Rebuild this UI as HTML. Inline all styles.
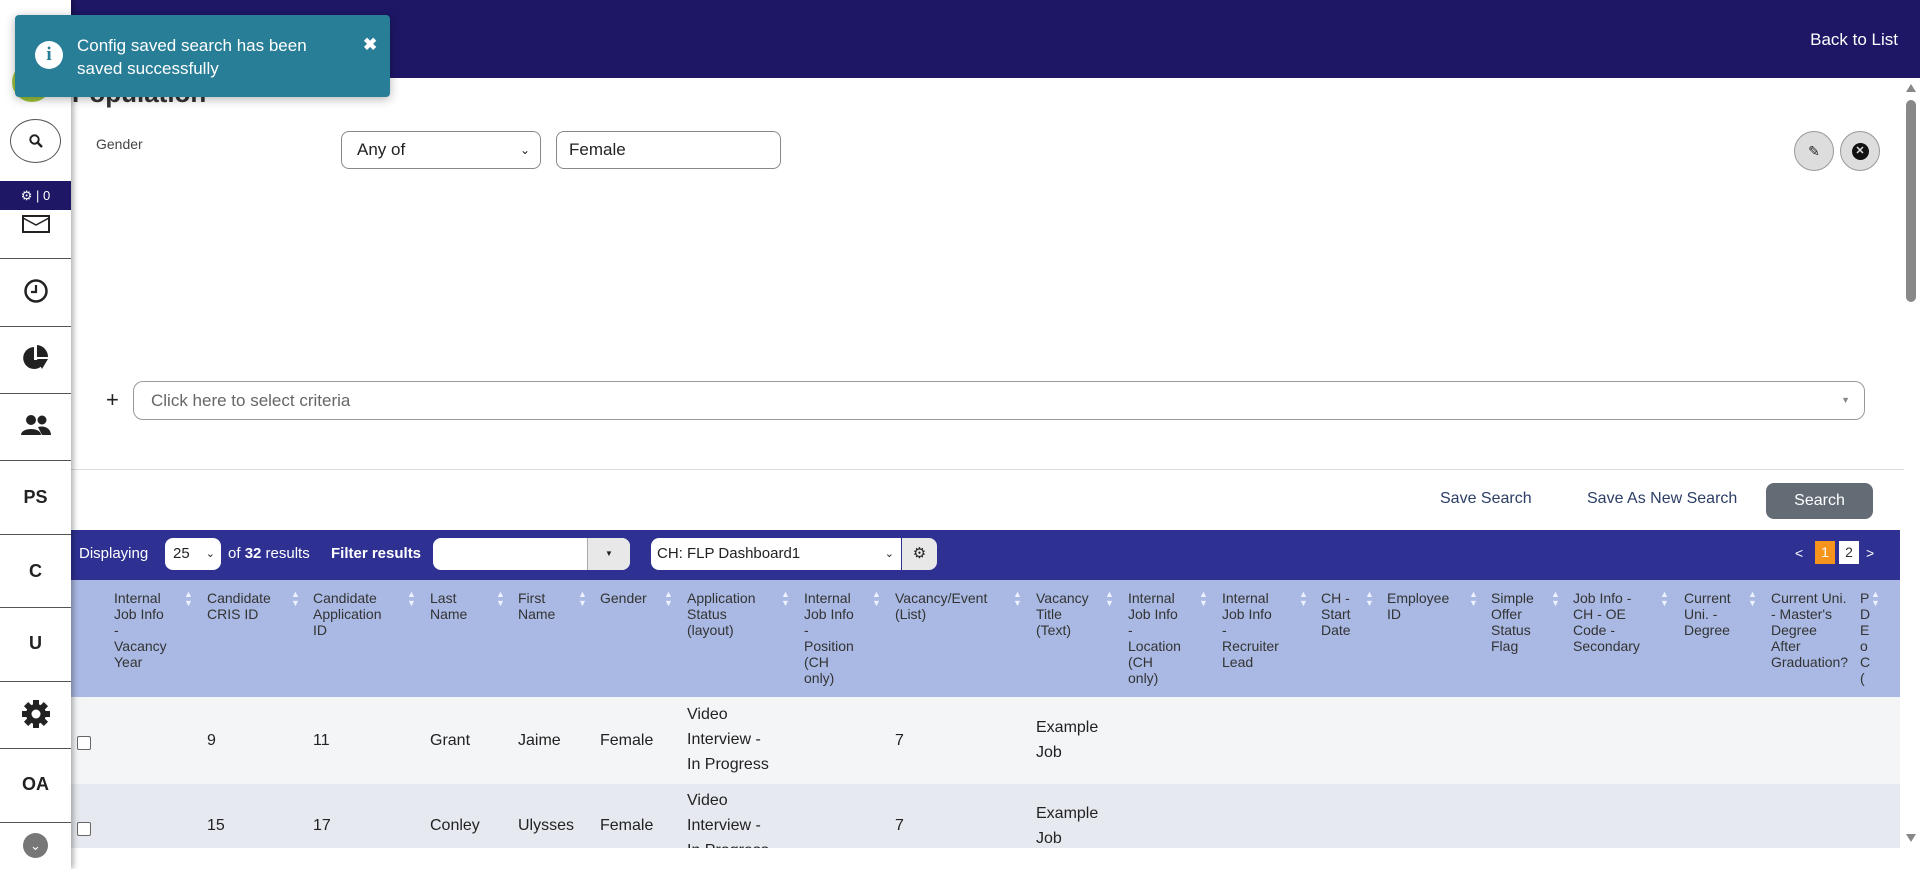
<!DOCTYPE html>
<html><head><meta charset="utf-8"><style>
*{box-sizing:border-box;margin:0;padding:0}
body{width:1920px;height:869px;overflow:hidden;background:#fff;font-family:"Liberation Sans",sans-serif;position:relative;color:#222}
.a{position:absolute}
.top{left:70px;top:0;width:1850px;height:78px;background:#1d1766}
.side{left:0;top:0;width:71px;height:869px;background:#fff;box-shadow:2px 0 6px rgba(0,0,0,.35);z-index:5}
.sep{position:absolute;left:0;width:71px;border-top:1px solid #555}
.si{position:absolute;left:0;width:71px;text-align:center;font-weight:bold;font-size:18px;color:#222}
.toast{left:15px;top:15px;width:375px;height:82px;background:#287d97;border-radius:4px;z-index:10;box-shadow:0 2px 10px rgba(0,0,0,.3);color:#fff;font-size:17px;line-height:23px}
.hd{font-size:14px;line-height:16px;color:#333;top:590px;position:absolute}
.bd{font-size:16px;line-height:25px;color:#222;position:absolute}
.s{position:absolute;top:590px;font-size:9px;line-height:9px;color:#eef2ff}
.cb{position:absolute;left:77px;width:14px;height:14px;border:1px solid #666;border-radius:2px;background:#fff}
</style></head><body>
<div class="a top"></div>
<div class="a" style="right:22px;top:30px;color:#fff;font-size:17px">Back to List</div>

<div class="a toast">
 <div class="a" style="left:20px;top:26px;width:28px;height:28px;border-radius:50%;background:#fff;color:#287d97;font-weight:bold;font-size:19px;line-height:28px;text-align:center;font-family:'Liberation Serif',serif">i</div>
 <div class="a" style="left:62px;top:19px">Config saved search has been<br>saved successfully</div>
 <div class="a" style="left:348px;top:18px;font-size:17px;font-weight:bold">✖</div>
</div>

<div class="a side">
 <div class="a" style="left:12px;top:62px;width:40px;height:40px;border-radius:50%;background:#9cc33b"></div>
 <div class="a" style="left:10px;top:119px;width:51px;height:44px;border:1px solid #555;border-radius:50%;text-align:center;line-height:42px">
  <svg width="16" height="16" viewBox="0 0 16 16" style="vertical-align:middle"><circle cx="6.5" cy="6.5" r="4.2" fill="none" stroke="#222" stroke-width="2"/><path d="M9.5 9.5L14 14" stroke="#222" stroke-width="2.4"/></svg></div>
 <div class="a" style="left:0;top:181px;width:71px;height:29px;background:#1d1766;color:#fff;font-size:13px;text-align:center;line-height:29px">⚙ | 0</div>
 <svg class="a" style="left:22px;top:215px" width="28" height="18" viewBox="0 0 28 18"><rect x="1" y="1" width="26" height="16" fill="none" stroke="#222" stroke-width="2"/><path d="M1 3L14 10L27 3" fill="none" stroke="#222" stroke-width="1.5"/></svg>
 <div class="sep" style="top:258px"></div>
 <svg class="a" style="left:23px;top:278px" width="26" height="26" viewBox="0 0 26 26"><circle cx="13" cy="13" r="10.5" fill="none" stroke="#222" stroke-width="2.5"/><path d="M13 7V14H8" fill="none" stroke="#222" stroke-width="2.2"/></svg>
 <div class="sep" style="top:326px"></div>
 <svg class="a" style="left:22px;top:344px" width="28" height="28" viewBox="0 0 28 28"><path d="M12 3A11 11 0 1 0 23 16H12Z" fill="#222"/><path d="M15 1V13H26A12 12 0 0 0 15 1Z" fill="#222"/><path d="M15 15H26L20 25Z" fill="#222"/></svg>
 <div class="sep" style="top:393px"></div>
 <svg class="a" style="left:21px;top:414px" width="30" height="22" viewBox="0 0 30 22"><circle cx="10" cy="6" r="5" fill="#222"/><path d="M0 21C0 13 20 13 20 21Z" fill="#222"/><circle cx="21" cy="6" r="4.5" fill="#222"/><path d="M17 13C24 11 30 15 30 21H21Z" fill="#222"/></svg>
 <div class="sep" style="top:460px"></div>
 <div class="si" style="top:487px">PS</div>
 <div class="sep" style="top:534px"></div>
 <div class="si" style="top:561px">C</div>
 <div class="sep" style="top:607px"></div>
 <div class="si" style="top:633px">U</div>
 <div class="sep" style="top:681px"></div>
 <svg class="a" style="left:21px;top:699px" width="30" height="30" viewBox="0 0 30 30"><g fill="#222"><rect x="12" y="1" width="6" height="28"/><rect x="1" y="12" width="28" height="6"/><rect x="12" y="1" width="6" height="28" transform="rotate(45 15 15)"/><rect x="12" y="1" width="6" height="28" transform="rotate(-45 15 15)"/><circle cx="15" cy="15" r="10"/></g><circle cx="15" cy="15" r="4.5" fill="#fff"/></svg>
 <div class="sep" style="top:748px"></div>
 <div class="si" style="top:774px">OA</div>
 <div class="sep" style="top:822px"></div>
 <div class="a" style="left:23px;top:833px;width:25px;height:25px;border-radius:50%;background:#777;color:#fff;text-align:center;font-size:13px;line-height:25px">⌄</div>
</div>

<div class="a" style="left:72px;top:78px;font-size:26px;font-weight:bold;color:#333">Population</div>
<div class="a" style="left:96px;top:136px;font-size:14px;color:#444">Gender</div>
<div class="a" style="left:341px;top:131px;width:200px;height:38px;border:1px solid #888;border-radius:8px;font-size:17px;line-height:36px;padding-left:15px">Any of<span style="position:absolute;right:10px;font-size:12px">⌄</span></div>
<div class="a" style="left:556px;top:131px;width:225px;height:38px;border:1px solid #888;border-radius:8px;font-size:17px;line-height:36px;padding-left:12px">Female</div>
<div class="a" style="left:1794px;top:131px;width:40px;height:40px;border:1px solid #999;border-radius:50%;background:#ddd;text-align:center;line-height:38px;font-size:14px">✎</div>
<div class="a" style="left:1840px;top:131px;width:40px;height:40px;border:1px solid #999;border-radius:50%;background:#ddd"><div style="margin:11px auto;width:17px;height:17px;border-radius:50%;background:#111;color:#ddd;font-size:11px;line-height:17px;text-align:center;font-weight:bold">✕</div></div>

<div class="a" style="left:1906px;top:84px;width:0;height:0;border-left:5px solid transparent;border-right:5px solid transparent;border-bottom:8px solid #888"></div>
<div class="a" style="left:1906px;top:100px;width:10px;height:202px;background:#888;border-radius:5px"></div>
<div class="a" style="left:1906px;top:834px;width:0;height:0;border-left:5px solid transparent;border-right:5px solid transparent;border-top:8px solid #888"></div>

<div class="a" style="left:106px;top:387px;font-size:22px">+</div>
<div class="a" style="left:133px;top:381px;width:1732px;height:39px;border:1px solid #999;border-radius:10px;font-size:17px;line-height:37px;padding-left:17px;color:#666">Click here to select criteria<span style="position:absolute;right:14px;font-size:9px;color:#888">▼</span></div>
<div class="a" style="left:71px;top:469px;width:1833px;border-top:1px solid #ddd"></div>

<div class="a" style="left:1440px;top:490px;font-size:16px;color:#2c3e66">Save Search</div>
<div class="a" style="left:1587px;top:490px;font-size:16px;color:#2c3e66">Save As New Search</div>
<div class="a" style="left:1766px;top:483px;width:107px;height:36px;background:#636b75;border-radius:8px;color:#fff;font-size:16px;text-align:center;line-height:36px">Search</div>

<div class="a" style="left:71px;top:530px;width:1829px;height:50px;background:#2e3192"></div>
<div class="a" style="left:79px;top:545px;color:#fff;font-size:15px">Displaying</div>
<div class="a" style="left:165px;top:538px;width:56px;height:32px;background:#fff;border-radius:8px;font-size:15px;line-height:32px;padding-left:8px">25<span style="position:absolute;right:6px;font-size:11px">⌄</span></div>
<div class="a" style="left:228px;top:545px;color:#fff;font-size:15px">of <b>32</b> results</div>
<div class="a" style="left:331px;top:545px;color:#fff;font-size:15px;font-weight:bold">Filter results</div>
<div class="a" style="left:433px;top:538px;width:197px;height:32px;background:#fff;border-radius:8px;overflow:hidden"><div style="position:absolute;right:0;top:0;width:43px;height:32px;background:#e8e8e8;border-left:1px solid #aaa;text-align:center;font-size:8px;line-height:32px">▼</div></div>
<div class="a" style="left:651px;top:538px;width:250px;height:32px;background:#fff;border-radius:8px 0 0 8px;font-size:15px;line-height:32px;padding-left:6px">CH: FLP Dashboard1<span style="position:absolute;right:7px;font-size:11px">⌄</span></div>
<div class="a" style="left:902px;top:538px;width:35px;height:32px;background:#e8e8e8;border-radius:0 8px 8px 0;text-align:center;line-height:32px;font-size:15px">⚙</div>
<div class="a" style="left:1795px;top:545px;color:#fff;font-size:14px">&lt;</div>
<div class="a" style="left:1815px;top:541px;width:20px;height:23px;background:#f7941d;color:#fff;font-size:14px;text-align:center;line-height:23px">1</div>
<div class="a" style="left:1839px;top:541px;width:20px;height:23px;background:#fff;color:#333;font-size:14px;text-align:center;line-height:23px">2</div>
<div class="a" style="left:1866px;top:545px;color:#fff;font-size:14px">&gt;</div>

<div class="a" style="left:71px;top:580px;width:1829px;height:117px;background:#a9b9e3"></div>
<div class="a" style="left:71px;top:697px;width:1829px;height:87px;background:#f4f5f7"></div>
<div class="a" style="left:71px;top:784px;width:1829px;height:64px;background:#e6eaf0"></div>

<div class="hd" style="left:114px">Internal<br>Job Info<br>-<br>Vacancy<br>Year</div>
<div class="hd" style="left:207px">Candidate<br>CRIS ID</div>
<div class="hd" style="left:313px">Candidate<br>Application<br>ID</div>
<div class="hd" style="left:430px">Last<br>Name</div>
<div class="hd" style="left:518px">First<br>Name</div>
<div class="hd" style="left:600px">Gender</div>
<div class="hd" style="left:687px">Application<br>Status<br>(layout)</div>
<div class="hd" style="left:804px">Internal<br>Job Info<br>-<br>Position<br>(CH<br>only)</div>
<div class="hd" style="left:895px">Vacancy/Event<br>(List)</div>
<div class="hd" style="left:1036px">Vacancy<br>Title<br>(Text)</div>
<div class="hd" style="left:1128px">Internal<br>Job Info<br>-<br>Location<br>(CH<br>only)</div>
<div class="hd" style="left:1222px">Internal<br>Job Info<br>-<br>Recruiter<br>Lead</div>
<div class="hd" style="left:1321px">CH -<br>Start<br>Date</div>
<div class="hd" style="left:1387px">Employee<br>ID</div>
<div class="hd" style="left:1491px">Simple<br>Offer<br>Status<br>Flag</div>
<div class="hd" style="left:1573px">Job Info -<br>CH - OE<br>Code -<br>Secondary</div>
<div class="hd" style="left:1684px">Current<br>Uni. -<br>Degree</div>
<div class="hd" style="left:1771px">Current Uni.<br>- Master's<br>Degree<br>After<br>Graduation?</div>
<div class="hd" style="left:1860px;width:40px;overflow:hidden">P<br>D<br>E<br>o<br>C<br>(</div>

<div class="s" style="left:184px">▲<br>▼</div>
<div class="s" style="left:291px">▲<br>▼</div>
<div class="s" style="left:407px">▲<br>▼</div>
<div class="s" style="left:496px">▲<br>▼</div>
<div class="s" style="left:578px">▲<br>▼</div>
<div class="s" style="left:664px">▲<br>▼</div>
<div class="s" style="left:781px">▲<br>▼</div>
<div class="s" style="left:872px">▲<br>▼</div>
<div class="s" style="left:1013px">▲<br>▼</div>
<div class="s" style="left:1105px">▲<br>▼</div>
<div class="s" style="left:1199px">▲<br>▼</div>
<div class="s" style="left:1299px">▲<br>▼</div>
<div class="s" style="left:1365px">▲<br>▼</div>
<div class="s" style="left:1469px">▲<br>▼</div>
<div class="s" style="left:1551px">▲<br>▼</div>
<div class="s" style="left:1660px">▲<br>▼</div>
<div class="s" style="left:1748px">▲<br>▼</div>
<div class="s" style="left:1871px">▲<br>▼</div>

<div class="cb" style="top:736px"></div>
<div class="bd" style="left:207px;top:728px">9</div>
<div class="bd" style="left:313px;top:728px">11</div>
<div class="bd" style="left:430px;top:728px">Grant</div>
<div class="bd" style="left:518px;top:728px">Jaime</div>
<div class="bd" style="left:600px;top:728px">Female</div>
<div class="bd" style="left:687px;top:702px">Video<br>Interview -<br>In Progress</div>
<div class="bd" style="left:895px;top:728px">7</div>
<div class="bd" style="left:1036px;top:715px">Example<br>Job</div>

<div class="cb" style="top:822px"></div>
<div class="bd" style="left:207px;top:813px">15</div>
<div class="bd" style="left:313px;top:813px">17</div>
<div class="bd" style="left:430px;top:813px">Conley</div>
<div class="bd" style="left:518px;top:813px">Ulysses</div>
<div class="bd" style="left:600px;top:813px">Female</div>
<div class="a" style="left:687px;top:788px;height:60px;overflow:hidden"><div class="bd" style="position:static">Video<br>Interview -<br>In Progress</div></div>
<div class="bd" style="left:895px;top:813px">7</div>
<div class="bd" style="left:1036px;top:801px">Example<br>Job</div>
</body></html>
